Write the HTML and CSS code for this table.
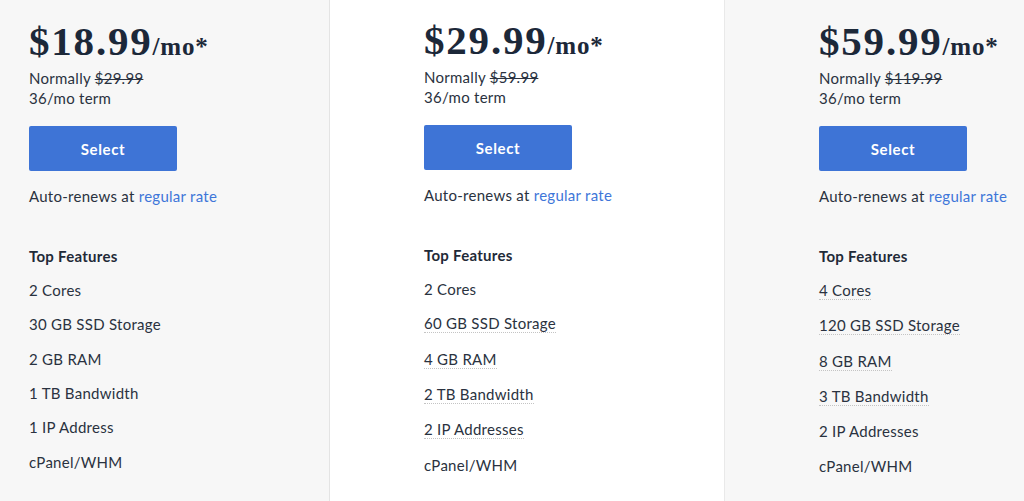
FILE: index.html
```html
<!DOCTYPE html>
<html lang="en">
<head>
<meta charset="utf-8">
<title>Plans</title>
<link rel="stylesheet" href="styles.css">
</head>
<body>
<div class="plans">
  <section class="plan plan-side plan-first">
    <div class="price">$18.99<span class="unit">/mo*</span></div>
    <p class="normal">Normally <s>$29.99</s><br>36/mo term</p>
    <button class="select">Select</button>
    <p class="renew">Auto-renews at <a href="#">regular rate</a></p>
    <h4 class="feat-title">Top Features</h4>
    <ul class="features">
      <li><span>2 Cores</span></li>
      <li><span>30 GB SSD Storage</span></li>
      <li><span>2 GB RAM</span></li>
      <li><span>1 TB Bandwidth</span></li>
      <li><span>1 IP Address</span></li>
      <li><span>cPanel/WHM</span></li>
    </ul>
  </section>
  <section class="plan plan-mid">
    <div class="price">$29.99<span class="unit">/mo*</span></div>
    <p class="normal">Normally <s>$59.99</s><br>36/mo term</p>
    <button class="select">Select</button>
    <p class="renew">Auto-renews at <a href="#">regular rate</a></p>
    <h4 class="feat-title">Top Features</h4>
    <ul class="features">
      <li><span>2 Cores</span></li>
      <li><span class="tip">60 GB SSD Storage</span></li>
      <li><span class="tip">4 GB RAM</span></li>
      <li><span class="tip">2 TB Bandwidth</span></li>
      <li><span class="tip">2 IP Addresses</span></li>
      <li><span>cPanel/WHM</span></li>
    </ul>
  </section>
  <section class="plan plan-side plan-last">
    <div class="price">$59.99<span class="unit">/mo*</span></div>
    <p class="normal">Normally <s>$119.99</s><br>36/mo term</p>
    <button class="select">Select</button>
    <p class="renew">Auto-renews at <a href="#">regular rate</a></p>
    <h4 class="feat-title">Top Features</h4>
    <ul class="features">
      <li><span class="tip">4 Cores</span></li>
      <li><span class="tip">120 GB SSD Storage</span></li>
      <li><span class="tip">8 GB RAM</span></li>
      <li><span class="tip">3 TB Bandwidth</span></li>
      <li><span>2 IP Addresses</span></li>
      <li><span>cPanel/WHM</span></li>
    </ul>
  </section>
</div>
</body>
</html>
```

FILE: styles.css
```css
* { box-sizing: border-box; }
html, body {
  margin: 0;
  padding: 0;
  height: 100%;
  overflow: hidden;
  background: #f7f7f7;
}
body {
  font-family: Lato, "Liberation Sans", sans-serif;
  font-size: 15px;
  letter-spacing: 0.27px;
  color: #2a3240;
}
.plans {
  display: grid;
  grid-template-columns: 329px 396px 1fr;
  height: 501px;
}
.plan {
  padding-top: 21px;
  display: flex;
  flex-direction: column;
  align-items: flex-start;
}
.plan-side { background: #f7f7f7; }
.plan-first {
  padding-left: 29px;
}
.plan-last {
  padding-left: 94px;
}
.plan-mid {
  background: #ffffff;
  border-left: 1px solid #e4e4e4;
  border-right: 1px solid #e9e9e9;
  padding-left: 94px;
  padding-top: 20px;
  box-shadow: 1px 0 2px rgba(0,0,0,0.04);
}
.price {
  font-family: "Liberation Serif", "Times New Roman", serif;
  font-weight: 700;
  font-size: 41px;
  line-height: 41px;
  letter-spacing: 1.8px;
  color: #1c2839;
}
.unit {
  font-size: 25px;
  line-height: 25px;
  letter-spacing: 0.8px;
}
.normal {
  margin: 7px 0 0;
  line-height: 19.5px;
}
.normal s {
  text-decoration-thickness: 1px;
}
.select {
  margin-top: 18px;
  width: 148px;
  height: 45px;
  border: 0;
  border-radius: 2px;
  background: #3e74d6;
  color: #fff;
  font-family: Lato, "Liberation Sans", sans-serif;
  font-weight: 700;
  font-size: 15px;
  letter-spacing: 0.6px;
  padding: 0;
}
.renew {
  margin: 16px 0 0;
  line-height: 19.5px;
}
.renew a {
  color: #3e76d9;
  text-decoration: none;
}
.feat-title {
  margin: 40px 0 0;
  font-size: 15px;
  font-weight: 700;
  line-height: 18px;
  color: #1f2a38;
}
.features {
  list-style: none;
  margin: 16.4px 0 0;
  padding: 0;
}
.features li {
  line-height: 18px;
  margin-bottom: 16.4px;
}
.features span {
  display: inline-block;
}
.features .tip {
  border-bottom: 1px dotted #c4c4c4;
}
```
